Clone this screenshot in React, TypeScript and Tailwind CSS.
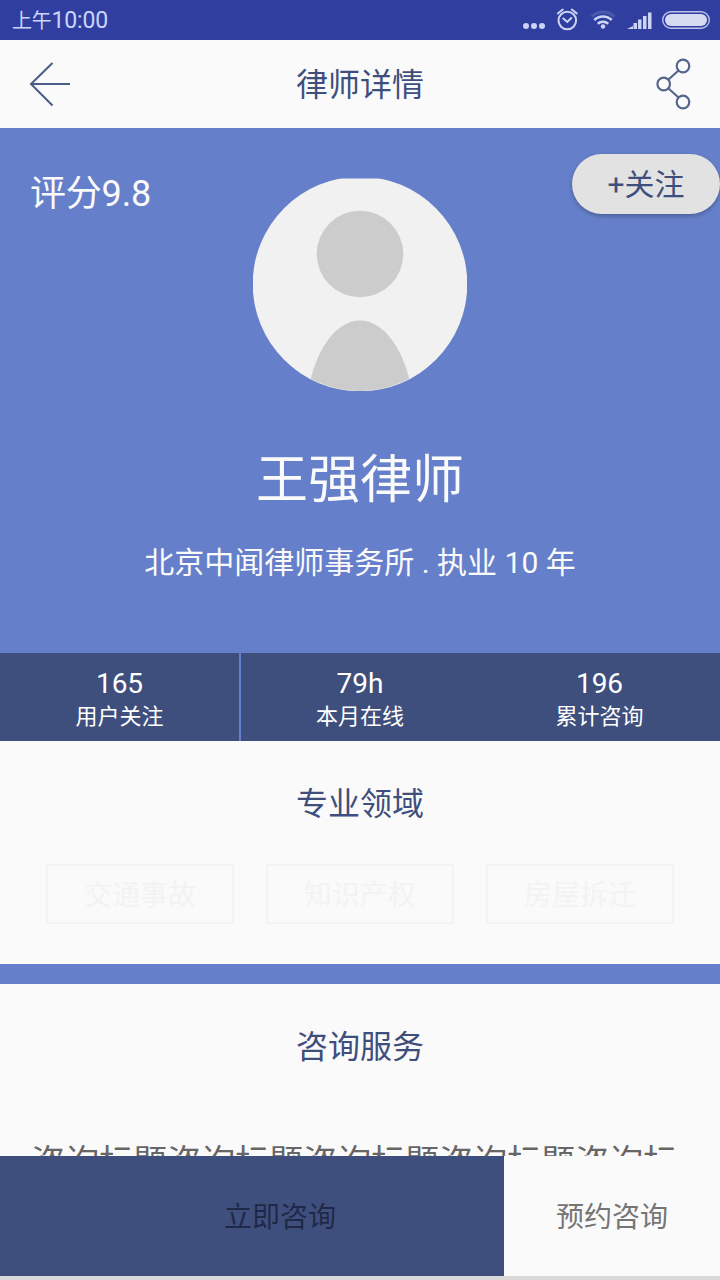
const stats = [
  { value: "165", label: "用户关注" },
  { value: "79h", label: "本月在线" },
  { value: "196", label: "累计咨询" },
];

const fields = ["交通事故", "知识产权", "房屋拆迁"];

function StatusBar() {
  return (
    <div className="flex h-10 shrink-0 items-center justify-between bg-[#303f9f] pl-3 pr-[9px] text-[#c9d5fb]">
      <span className="pt-0.5 text-[23px] leading-[38px] tracking-[-0.2px]">
        <span className="text-[20px]">上午</span>10:00
      </span>
      <svg width="190" height="40" viewBox="0 0 190 40" fill="none">
        {/* More */}
        <g fill="#ccd4f4">
          <circle cx="5" cy="26" r="3" />
          <circle cx="13" cy="26" r="3" />
          <circle cx="21" cy="26" r="3" />
        </g>
        {/* Alarm */}
        <g stroke="#ccd4f4" strokeWidth="2" strokeLinecap="round">
          <circle cx="46.3" cy="20.5" r="8.8" />
          <path d="M42.3 18.5l4 3.5 4-4" />
          <path d="M36.8 13.5l5-4M55.8 13.5l-5-4" />
        </g>
        {/* Wifi */}
        <g fill="none" strokeWidth="2.6">
          <path d="M70.5 16.8a16 16 0 0 1 23 0" stroke="#4a59ae" strokeWidth="3" />
          <path d="M73.3 20a12.4 12.4 0 0 1 17.4 0" stroke="#ccd4f4" />
          <path d="M76.8 23.8a7.6 7.6 0 0 1 10.4 0" stroke="#ccd4f4" />
          <circle cx="82" cy="26.5" r="2.2" fill="#ccd4f4" />
        </g>
        {/* Signal */}
        <g fill="#ccd4f4">
          <path d="M106 29l6-3v3z" />
          <rect x="112.5" y="23" width="3.5" height="6" />
          <rect x="117" y="19.5" width="3.5" height="9.5" />
          <rect x="122" y="16" width="3.5" height="13" />
          <rect x="127" y="12.5" width="3.5" height="16.5" />
        </g>
        {/* Battery */}
        <rect x="141.7" y="11.7" width="46.6" height="16.6" rx="8.3" stroke="#b9c2ec" strokeWidth="1.4" />
        <rect x="144" y="14" width="42" height="12" rx="6" fill="#d5daf0" />
      </svg>
    </div>
  );
}

function TitleBar() {
  return (
    <header className="flex h-[88px] shrink-0 items-center justify-between bg-[#fafafa] px-7 text-[#3f4f7d]">
      <svg width="44" height="48" viewBox="0 0 44 48" fill="none" stroke="#4d5c85" strokeWidth="2">
        <path d="M42 24H3M24.5 3L3 24l21.5 21.5" />
      </svg>
      <h1 className="pt-0.5 text-[32px] leading-[48px]">律师详情</h1>
      <svg width="44" height="56" viewBox="0 0 44 56" fill="none" stroke="#56658c" strokeWidth="2.2">
        <circle cx="35" cy="10" r="6.3" />
        <circle cx="15.7" cy="28" r="6.3" />
        <circle cx="35" cy="46" r="6.3" />
        <path d="M30.5 14.5L20.5 23.5M20.5 32.5l10 9" />
      </svg>
    </header>
  );
}

function Avatar() {
  return (
    <svg width="216" height="216" viewBox="0 0 216 216">
      <defs>
        <clipPath id="frame">
          <path d="M1 2.5H215V215H1z" />
        </clipPath>
        <clipPath id="face">
          <circle cx="108" cy="108" r="107" />
        </clipPath>
      </defs>
      <g clipPath="url(#frame)">
        <circle cx="108" cy="108" r="107.3" fill="#f1f1f1" />
        <circle cx="108" cy="78" r="43.3" fill="#ccc" />
        <path
          d="M56 216C63 174 84 144.5 108 144.5S153 174 160 216z"
          fill="#ccc"
          clipPath="url(#face)"
        />
      </g>
    </svg>
  );
}

function Hero() {
  return (
    <section className="flex h-[525px] shrink-0 flex-col items-center bg-[#657fca] text-[#fafafa]">
      <div className="grid w-full grid-cols-[1fr_216px_1fr]">
        <div className="pl-[30px] pt-[42px] text-[36px] leading-[48px] tracking-[-0.2px]">评分9.8</div>
        <div className="pt-12">
          <Avatar />
        </div>
        <div className="flex justify-end pt-[26px]">
          <button className="h-[60px] w-[148px] rounded-full bg-[#e2e2e2] pt-0.5 text-[30px] leading-[58px] text-[#3f4f7d] shadow-[0_2px_4px_rgba(0,0,0,0.25)]">
            +关注
          </button>
        </div>
      </div>
      <h2 className="mt-[51px] text-[52px] leading-[76px]">王强律师</h2>
      <p className="mt-[22px] text-[30px] leading-[44px]">北京中闻律师事务所 . 执业 10 年</p>
    </section>
  );
}

function Stats() {
  return (
    <section className="grid h-[88px] shrink-0 grid-cols-[241px_238px_241px] bg-[#3f4f7d] text-center text-white">
      {stats.map((s, i) => (
        <div
          key={s.label}
          className={i === 0 ? "border-r-2 border-[#657fca] pt-3.5" : "pt-3.5"}
        >
          <div className="text-[28px] leading-[34px]">{s.value}</div>
          <div className="text-[22px] leading-[32px]">{s.label}</div>
        </div>
      ))}
    </section>
  );
}

export default function App() {
  return (
    <div className="flex h-[1280px] w-[720px] flex-col overflow-hidden bg-[#fafafa] font-['Roboto','Noto_Sans_CJK_SC',sans-serif]">
      <StatusBar />
      <TitleBar />
      <Hero />
      <Stats />

      {/* Expertise */}
      <section className="h-[223px] shrink-0 pt-[39px]">
        <h3 className="text-center text-[32px] leading-[48px] text-[#3f4f7d]">专业领域</h3>
        <div className="mt-9 flex justify-center gap-8">
          {fields.map((name) => (
            <span
              key={name}
              className="h-[60px] w-[188px] border-2 border-[#f4f4f4] pt-0.5 text-center text-[28px] leading-[56px] text-[#f3f3f3]"
            >
              {name}
            </span>
          ))}
        </div>
      </section>

      <div className="h-5 shrink-0 bg-[#657fca]" />

      {/* Services, the list scrolls under the bottom bar */}
      <section className="h-[172px] shrink-0 overflow-hidden pt-[39px]">
        <h3 className="text-center text-[32px] leading-[48px] text-[#3f4f7d]">咨询服务</h3>
        <p className="mt-[66px] whitespace-nowrap pl-[31px] text-[34px] leading-[50px] text-[#666]">
          咨询标题咨询标题咨询标题咨询标题咨询标
        </p>
      </section>

      {/* Bottom actions */}
      <footer className="flex h-[120px] shrink-0 text-[28px] leading-[116px]">
        <button className="w-[504px] bg-[#3f4f7d] pl-14 pt-1 text-center text-[#1f2947]">立即咨询</button>
        <button className="flex-1 pt-1 text-center text-[#757575]">预约咨询</button>
      </footer>
      <div className="h-1 shrink-0 bg-[#d9d9d9]" />
    </div>
  );
}
